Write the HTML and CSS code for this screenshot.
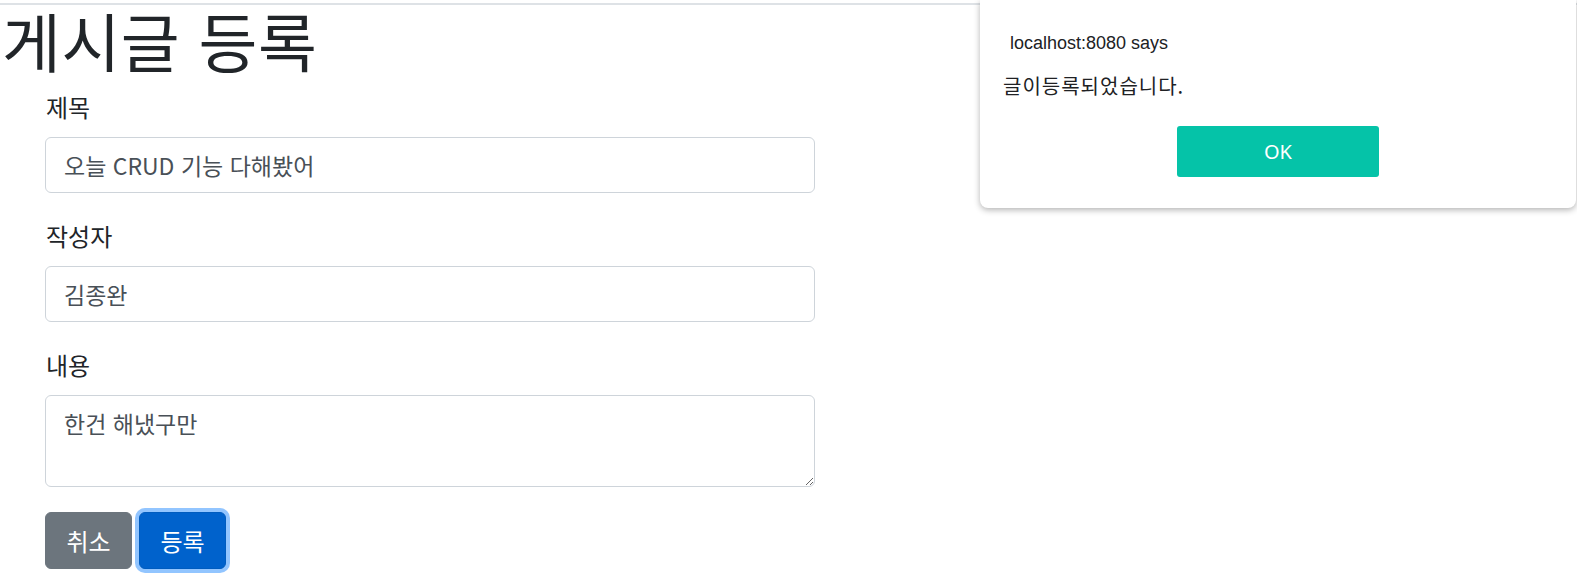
FILE: index.html
```html
<!DOCTYPE html>
<html lang="ko">
<head>
<meta charset="utf-8">
<title>게시글 등록</title>
<link rel="stylesheet" href="styles.css">
</head>
<body>
<div class="topline"></div>
<h1 class="title">게시글 등록</h1>
<form class="form">
  <div class="group">
    <label class="label">제목</label>
    <input class="control" type="text" value="오늘 CRUD 기능 다해봤어">
  </div>
  <div class="group">
    <label class="label">작성자</label>
    <input class="control" type="text" value="김종완">
  </div>
  <div class="group">
    <label class="label">내용</label>
    <textarea class="control area" rows="2">한건 해냈구만</textarea>
  </div>
  <div class="buttons">
    <button type="button" class="btn btn-gray">취소</button>
    <button type="button" class="btn btn-blue">등록</button>
  </div>
</form>

<div class="dialog">
  <div class="origin">localhost:8080 says</div>
  <div class="message">글이등록되었습니다.</div>
  <div class="dialog-actions">
    <button type="button" class="ok">OK</button>
  </div>
</div>
</body>
</html>
```

FILE: styles.css
```css
html, body {
  margin: 0;
  padding: 0;
  background: #ffffff;
}
body {
  font-family: "Noto Sans CJK KR", "Noto Sans", sans-serif;
  color: #212529;
  position: relative;
  width: 1577px;
  height: 587px;
  overflow: hidden;
}
.topline {
  margin-top: 3px;
  height: 2px;
  background: #dee2e6;
}
.title {
  margin: -4px 0 11px 0;
  padding-left: 2px;
  font-size: 64px;
  font-weight: 400;
  line-height: 77px;
  color: #212529;
  letter-spacing: 0.5px;
}
.form {
  margin: 0;
  padding-left: 45px;
  width: 770px;
}
.group {
  margin-bottom: 25px;
}
.label {
  display: block;
  font-size: 24px;
  line-height: 36px;
  margin-bottom: 12px;
  padding-left: 1px;
  color: #212529;
}
.control {
  display: block;
  box-sizing: border-box;
  width: 770px;
  height: 56px;
  padding: 9px 18px;
  font-family: "Noto Sans CJK KR", "Noto Sans", sans-serif;
  font-size: 23px;
  line-height: 36px;
  color: #495057;
  background: #ffffff;
  border: 1px solid #ced4da;
  border-radius: 6px;
  outline: none;
  margin: 0;
}
.area {
  height: 92px;
  resize: vertical;
}
.buttons {
  display: flex;
  gap: 7px;
  align-items: center;
}
.btn {
  box-sizing: border-box;
  height: 57px;
  padding: 9px 18px;
  font-family: "Noto Sans CJK KR", "Noto Sans", sans-serif;
  font-size: 24px;
  line-height: 36px;
  color: #ffffff;
  border: 1px solid transparent;
  border-radius: 6px;
  margin: 0;
}
.btn-gray {
  background: #6c757d;
  border-color: #6c757d;
  width: 87px;
}
.btn-blue {
  background: #0062cc;
  border-color: #005cbf;
  width: 87px;
  box-shadow: 0 0 0 4px #92c5ff;
}
.dialog {
  position: absolute;
  top: 0;
  left: 980px;
  width: 596px;
  height: 208px;
  box-sizing: border-box;
  background: #ffffff;
  border-radius: 0 0 8px 8px;
  box-shadow: 0 2px 6px rgba(0, 0, 0, 0.3);
  padding: 33px 0 0 0;
}
.origin {
  font-family: "Liberation Sans", "Noto Sans", sans-serif;
  font-size: 18px;
  line-height: 20px;
  color: #202124;
  padding-left: 30px;
}
.message {
  margin-top: 21px;
  font-family: "Noto Sans CJK KR", sans-serif;
  font-size: 20px;
  line-height: 24px;
  letter-spacing: 1px;
  color: #202124;
  padding-left: 23px;
}
.dialog-actions {
  margin-top: 28px;
  padding-left: 197px;
}
.ok {
  width: 202px;
  height: 51px;
  border: none;
  border-radius: 3px;
  background: #05c3a8;
  color: #ffffff;
  font-family: "Noto Sans", "Liberation Sans", sans-serif;
  font-size: 20px;
  margin: 0;
}
```
